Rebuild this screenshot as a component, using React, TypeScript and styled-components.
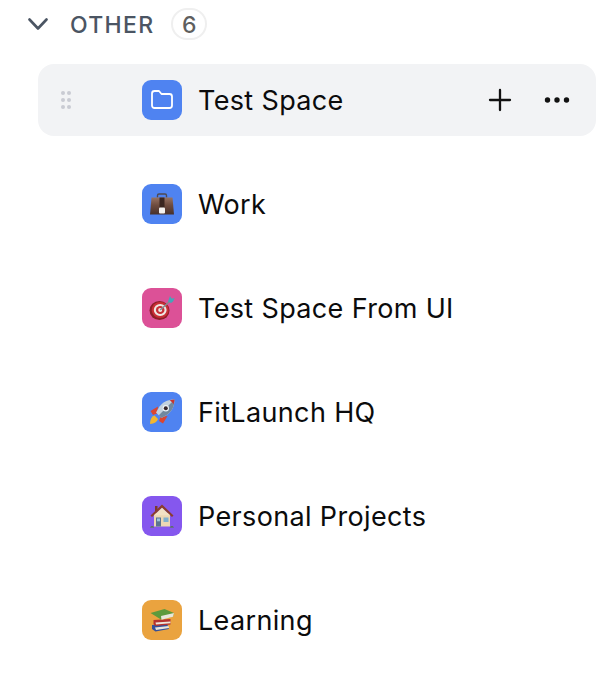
import styled, { createGlobalStyle } from 'styled-components';
import type { ReactNode } from 'react';

const GlobalStyle = createGlobalStyle`
    html, body {
        margin: 0;
        padding: 0;
        background: #ffffff;
    }
`;

const Briefcase = () => (
    <svg width="26" height="26" viewBox="0 0 26 26">
        <defs>
            <linearGradient id="caseBody" x1="0" y1="0" x2="0" y2="1">
                <stop offset="0" stopColor="#977363" />
                <stop offset="0.45" stopColor="#6f4c3e" />
                <stop offset="1" stopColor="#46302a" />
            </linearGradient>
        </defs>
        <path d="M8.5 6.5V4.5C8.500 3.600 9.200 3 10 3h6c.8 0 1.500.6 1.500 1.500v2" fill="none" stroke="#4f4a50" strokeWidth="1.4" />
        <path d="M2.500 6.500h21L25 23.500H1z" fill="url(#caseBody)" />
        <rect x="10.500" y="6.500" width="5" height="11" fill="#3a2620" />
        <rect x="10" y="16.500" width="6" height="6" rx="1" fill="#f4f2ef" />
    </svg>
);

const Target = () => (
    <svg width="26" height="26" viewBox="0 0 26 26">
        <ellipse cx="10.500" cy="15.500" rx="10" ry="9.500" fill="#8e1f26" />
        <ellipse cx="11.200" cy="15" rx="8.500" ry="8" fill="#c92f36" />
        <ellipse cx="11.200" cy="15" rx="6.400" ry="6" fill="#efe8e4" />
        <ellipse cx="11.200" cy="15" rx="4.300" ry="4" fill="#c92f36" />
        <circle cx="11.200" cy="15" r="2" fill="#efe8e4" />
        <path d="M11.200 15L21 6" stroke="#808c92" strokeWidth="1.5" />
        <path d="M19 6.500l2-5.500 1.500 2.500 3.200-.3-1.700 3.300-2 1.500z" fill="#46a5b8" />
    </svg>
);

const Rocket = () => (
    <svg width="26" height="26" viewBox="0 0 26 26">
        <path d="M1 25c0-4.500 1.500-7.500 4.500-8.500l3.500 3.500c-1 3-3.500 4.500-8 5z" fill="#f4b62f" />
        <path d="M1.500 12L9 7.500l-1 7L4 16z" fill="#dc452f" />
        <path d="M14 24.500l4.500-7.500-7 1L10 22z" fill="#dc452f" />
        <path d="M25.500 .5c-6.500 0-11.500 2.500-15 7L7 13.500l5.500 5.500 6-3.500c4.500-3.500 7-8.500 7-15z" fill="#c2d1de" />
        <path d="M25.500 .5c0 6.500-2.500 11.500-7 15l-6 3.500-2.700-2.700z" fill="#71889e" />
        <circle cx="16.800" cy="9.200" r="3.200" fill="#eef2f5" />
        <circle cx="16.800" cy="9.200" r="2" fill="#35262a" />
        <path d="M20.500 1.500c1.500.6 3.200 2.200 3.800 3.800.7-1.500 1.200-3.100 1.200-4.800-1.800 0-3.500.3-5 1z" fill="#c9332e" />
    </svg>
);

const House = () => (
    <svg width="26" height="26" viewBox="0 0 26 26">
        <rect x="5" y="10" width="16" height="13.5" fill="#ecd7b4" />
        <rect x="6" y="3" width="2.5" height="5" fill="#7a3a2c" />
        <path d="M13 1.500L1.500 12.500l1.500 1.500L13 4.800l10 9.200 1.500-1.500z" fill="#8a3d30" />
        <path d="M13 4.800L5 12.200h16z" fill="#f2e1c4" />
        <rect x="7" y="14.500" width="5" height="9" fill="#5b7390" />
        <rect x="8" y="15.500" width="3" height="2.800" fill="#9cc4dc" />
        <rect x="14.500" y="14.500" width="5" height="4.500" fill="#7fb0cf" />
        <path d="M1 24.500c1-1.800 3.300-1.800 4.300 0zM20.700 24.500c1-1.800 3.300-1.800 4.300 0z" fill="#4e7a34" />
    </svg>
);

const Books = () => (
    <svg width="26" height="26" viewBox="0 0 26 26">
        <path d="M3 18l15-1.500 2 5.500L6.500 24.500 3 22z" fill="#34509a" />
        <path d="M6 20.500l13.500-1.500.6 2L7 23z" fill="#e8e4dc" />
        <path d="M4.500 13l17-1v5.500L6.500 19l-2-2z" fill="#b5322e" />
        <path d="M6.500 15.500l15-1v1.800L7 17.500z" fill="#ece6da" />
        <path d="M1.500 6l14-4L25 6l-1 3.500-12 3z" fill="#5d9a3c" />
        <path d="M12 9l13-3-1 3.800-11.500 2.900z" fill="#e9e6da" />
    </svg>
);

const FolderIcon = () => (
    <svg width="24" height="24" viewBox="0 0 24 24" fill="none" stroke="#ffffff" strokeWidth="1.8" strokeLinejoin="round">
        <path d="M2 5.500C2 4.100 3 3 4.500 3H9l2.500 3h8C20.900 6 22 7.100 22 8.500v9c0 1.400-1.100 2.500-2.500 2.500h-15C3 20 2 18.900 2 17.500z" />
    </svg>
);

type Space = {
    name: string;
    color: string;
    icon: ReactNode;
    active?: boolean;
};

const spaces: Space[] = [
    { name: 'Test Space', color: '#4f83f1', icon: <FolderIcon />, active: true },
    { name: 'Work', color: '#4f83f1', icon: <Briefcase /> },
    { name: 'Test Space From UI', color: '#dc5197', icon: <Target /> },
    { name: 'FitLaunch HQ', color: '#4f83f1', icon: <Rocket /> },
    { name: 'Personal Projects', color: '#8557ee', icon: <House /> },
    { name: 'Learning', color: '#eaa33f', icon: <Books /> },
];

export default function App() {
    return (
        <Page>
            <GlobalStyle />
            <Header>
                <Chevron width="20" height="14" viewBox="0 0 20 14">
                    <path d="M1.500 2.500L10 11.500l8.500-9" />
                </Chevron>
                <Title>OTHER</Title>
                <Count>6</Count>
            </Header>
            <List>
                {spaces.map((s) => (
                    <Row key={s.name} $active={s.active}>
                        {s.active && (
                            <Grip>
                                {Array.from({ length: 6 }).map((_, i) => (
                                    <GripDot key={i} />
                                ))}
                            </Grip>
                        )}
                        <IconTile $color={s.color}>{s.icon}</IconTile>
                        <Name>{s.name}</Name>
                        {s.active && (
                            <Actions>
                                <svg width="24" height="24" viewBox="0 0 24 24" fill="none" stroke="#111111" strokeWidth="2.3" strokeLinecap="round">
                                    <path d="M12 2v20M2 12h20" />
                                </svg>
                                <svg width="26" height="8" viewBox="0 0 26 8" fill="#111111">
                                    <circle cx="3.5" cy="4" r="2.7" />
                                    <circle cx="13" cy="4" r="2.7" />
                                    <circle cx="22.500" cy="4" r="2.7" />
                                </svg>
                            </Actions>
                        )}
                    </Row>
                ))}
            </List>
        </Page>
    );
}

const Page = styled.div`
    width: 606px;
    height: 678px;
    overflow: hidden;
    box-sizing: border-box;
    padding: 8px 10px 0 38px;
    background: #ffffff;
    font-family: Inter, 'Liberation Sans', sans-serif;
`;

const Header = styled.div`
    display: flex;
    align-items: center;
    height: 32px;
    margin-left: -10px;
`;

const Chevron = styled.svg`
    fill: none;
    stroke: #4b5563;
    stroke-width: 2.6;
    stroke-linecap: round;
    stroke-linejoin: round;
    margin-right: 22px;
`;

const Title = styled.span`
    padding-top: 2px;
    font-size: 23px;
    font-weight: 500;
    letter-spacing: 1.3px;
    color: #4b5563;
`;

const Count = styled.span`
    display: flex;
    align-items: center;
    justify-content: center;
    box-sizing: border-box;
    width: 36px;
    height: 32px;
    margin-left: 17px;
    padding-top: 1px;
    border: 2px solid #efefef;
    border-radius: 16px;
    font-size: 23px;
    font-weight: 500;
    color: #5f5f5f;
`;

const List = styled.div`
    display: flex;
    flex-direction: column;
    gap: 32px;
    margin-top: 24px;
`;

const Row = styled.div<{ $active?: boolean }>`
    position: relative;
    display: flex;
    align-items: center;
    height: 72px;
    padding: 0 26px 0 104px;
    border-radius: 16px;
    background: ${(p) => (p.$active ? '#f2f3f5' : 'transparent')};
`;

const Grip = styled.div`
    position: absolute;
    left: 23px;
    top: 27px;
    display: grid;
    grid-template-columns: repeat(2, 4px);
    grid-auto-rows: 4px;
    column-gap: 2px;
    row-gap: 3px;
`;

const GripDot = styled.span`
    border-radius: 50%;
    background: #c9cbd3;
`;

const IconTile = styled.div<{ $color: string }>`
    display: flex;
    align-items: center;
    justify-content: center;
    flex: none;
    width: 40px;
    height: 40px;
    border-radius: 9px;
    background: ${(p) => p.$color};
`;

const Name = styled.span`
    flex: 1;
    margin-left: 16px;
    font-size: 27px;
    font-weight: 400;
    letter-spacing: 0.35px;
    color: #0b0b0c;
`;

const Actions = styled.div`
    display: flex;
    align-items: center;
    gap: 32px;
`;
